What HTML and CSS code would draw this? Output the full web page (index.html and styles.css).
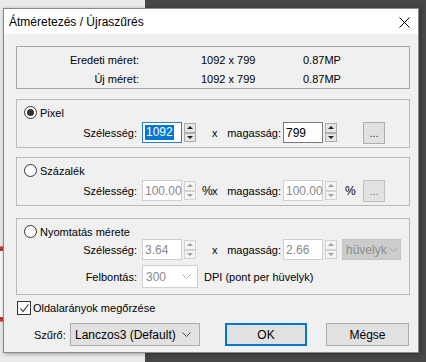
FILE: index.html
```html
<!DOCTYPE html>
<html>
<head>
<meta charset="utf-8">
<link rel="stylesheet" href="styles.css">
</head>
<body>
<div class="desk">
  <div class="bg-strip"></div>
  <div class="dialog">
    <div class="titlebar">
      <span class="title">Átméretezés / Újraszűrés</span>
      <svg class="close" width="11" height="11" viewBox="0 0 11 11"><path d="M0.5 0.5 L10.5 10.5 M10.5 0.5 L0.5 10.5" stroke="#000" stroke-width="1" fill="none"/></svg>
    </div>
    <div class="content">
      <div class="info">
        <div class="info-row"><span class="info-label">Eredeti méret:</span><span class="info-val">1092 x 799</span><span class="info-mp">0.87MP</span></div>
        <div class="info-row"><span class="info-label">Új méret:</span><span class="info-val">1092 x 799</span><span class="info-mp">0.87MP</span></div>
      </div>

      <div class="group g-pixel">
        <div class="ghead"><span class="radio on"></span><span>Pixel</span></div>
        <div class="row">
          <span class="lbl">Szélesség:</span>
          <span class="inp focus"><span class="sel">1092</span></span>
          <span class="spin"><span class="sb"><span class="tri up"></span></span><span class="sb"><span class="tri down"></span></span></span>
          <span class="xch">x</span>
          <span class="lbl2">magasság:</span>
          <span class="inp">799</span>
          <span class="spin"><span class="sb"><span class="tri up"></span></span><span class="sb"><span class="tri down"></span></span></span>
          <span class="dots">...</span>
        </div>
      </div>

      <div class="group g-pct">
        <div class="ghead"><span class="radio"></span><span>Százalék</span></div>
        <div class="row">
          <span class="lbl">Szélesség:</span>
          <span class="inp dis">100.00</span>
          <span class="spin dis"><span class="sb"><span class="tri up"></span></span><span class="sb"><span class="tri down"></span></span></span>
          <span class="pct1">%</span>
          <span class="xch xch2">x</span>
          <span class="lbl2">magasság:</span>
          <span class="inp dis">100.00</span>
          <span class="spin dis"><span class="sb"><span class="tri up"></span></span><span class="sb"><span class="tri down"></span></span></span>
          <span class="pct">%</span>
          <span class="dots dots2">...</span>
        </div>
      </div>

      <div class="group g-print">
        <div class="ghead"><span class="radio"></span><span>Nyomtatás mérete</span></div>
        <div class="row row-p1">
          <span class="lbl">Szélesség:</span>
          <span class="inp dis">3.64</span>
          <span class="spin dis"><span class="sb"><span class="tri up"></span></span><span class="sb"><span class="tri down"></span></span></span>
          <span class="xch">x</span>
          <span class="lbl2">magasság:</span>
          <span class="inp dis">2.66</span>
          <span class="spin dis"><span class="sb"><span class="tri up"></span></span><span class="sb"><span class="tri down"></span></span></span>
          <span class="unit"><span class="unit-text">hüvelyk</span><svg class="chev" width="9" height="5" viewBox="0 0 9 5"><path d="M0.5 0.5 L4.5 4.5 L8.5 0.5" stroke="#a8a8a8" fill="none"/></svg></span>
        </div>
        <div class="row row-p2">
          <span class="lbl">Felbontás:</span>
          <span class="dpi"><span>300</span><svg class="chev" width="9" height="5" viewBox="0 0 9 5"><path d="M0.5 0.5 L4.5 4.5 L8.5 0.5" stroke="#b0b0b0" fill="none"/></svg></span>
          <span class="dpi-text">DPI (pont per hüvelyk)</span>
        </div>
      </div>

      <div class="check-row">
        <span class="checkbox"><svg width="11" height="11" viewBox="0 0 11 11"><path d="M1.5 5.5 L4 8.5 L9.5 1.5" stroke="#222" stroke-width="1.1" fill="none"/></svg></span>
        <span>Oldalarányok megőrzése</span>
      </div>

      <div class="bottom-row">
        <span class="flbl">Szűrő:</span>
        <span class="filter"><span>Lanczos3 (Default)</span><svg class="chev" width="9" height="5" viewBox="0 0 9 5"><path d="M0.5 0.5 L4.5 4.5 L8.5 0.5" stroke="#444" fill="none"/></svg></span>
        <span class="btn ok">OK</span>
        <span class="btn cancel">Mégse</span>
      </div>
    </div>
  </div>
</div>
</body>
</html>
```

FILE: styles.css
```css
html, body {
  margin: 0;
  padding: 0;
}
body {
  width: 426px;
  height: 362px;
  overflow: hidden;
  background: linear-gradient(to right, #ebebeb 0, #ebebeb 145px, #464646 145px, #464646 100%);
  font-family: "Liberation Sans", Arial, sans-serif;
  font-size: 11px;
  color: #000;
}
.desk {
  padding: 8px 0 0 3px;
  position: relative;
}
.bg-strip {
  position: absolute;
  left: 0;
  top: 246px;
  width: 3px;
  height: 74px;
  background: #fafafa;
  border-top: 1px solid #d88;
  border-bottom: 1px solid #d88;
  box-shadow: inset 0 18px 0 -14px #c0392b, inset 0 -34px 0 -30px #c0392b;
}
.dialog {
  position: relative;
  width: 414px;
  height: 343px;
  border: 1px solid #8a8a8a;
  background: #f0f0f0;
  box-shadow: 1px 1px 4px rgba(0,0,0,0.35);
}
.titlebar {
  height: 25px;
  background: #fff;
  display: flex;
  align-items: center;
  padding-left: 5px;
}
.title {
  font-size: 12px;
  flex: 1;
  padding-top: 1px;
}
.close {
  margin-right: 8px;
  margin-top: 2px;
}
.content {
  padding: 12px 8px 0 12px;
  display: flex;
  flex-direction: column;
}
.info {
  border: 1px solid #a8a8a8;
  padding-top: 3px;
  height: 38px;
}
.info-row {
  height: 19px;
  display: flex;
  align-items: center;
}
.info-label {
  width: 122px;
  text-align: right;
}
.info-val {
  margin-left: 62px;
  width: 102px;
}
.group {
  border: 1px solid #bababa;
  box-sizing: border-box;
  padding: 6px 0 0 0;
}
.g-pixel { margin-top: 10px; height: 49px; }
.g-pct { margin-top: 9px; height: 49px; }
.g-print { margin-top: 12px; height: 77px; }
.ghead {
  height: 13px;
  display: flex;
  align-items: center;
  padding-left: 7px;
}
.radio {
  width: 11px;
  height: 11px;
  border: 1px solid #333;
  border-radius: 50%;
  background: #fff;
  margin-right: 3px;
  position: relative;
  flex: none;
}
.radio.on::after {
  content: "";
  position: absolute;
  left: 2px;
  top: 2px;
  width: 7px;
  height: 7px;
  border-radius: 50%;
  background: #333;
}
.row {
  display: flex;
  align-items: center;
  height: 21px;
  margin-top: 3px;
}
.row-p1 { margin-top: 1px; }
.row-p2 { margin-top: 5px; height: 23px; }
.lbl {
  width: 120px;
  text-align: right;
  margin-right: 5px;
  flex: none;
}
.inp {
  box-sizing: border-box;
  width: 40px;
  height: 21px;
  border: 1px solid #7a7a7a;
  background: #fff;
  display: flex;
  align-items: center;
  padding-left: 2px;
  flex: none;
  white-space: nowrap;
  font-size: 12px;
}
.inp.dis {
  border-color: #cfcfcf;
  color: #8a8a8a;
}
.inp.focus {
  border-color: #2b7bd0;
}
.sel {
  background: #0078d7;
  color: #fff;
  line-height: 15px;
  padding: 0 1px;
}
.spin {
  margin-left: 2px;
  width: 12px;
  height: 19px;
  display: flex;
  flex-direction: column;
  justify-content: space-between;
  flex: none;
}
.sb {
  height: 8px;
  border: 1px solid #adadad;
  background: #e5e5e5;
  display: flex;
  align-items: center;
  justify-content: center;
}
.spin.dis .sb {
  border-color: #d3d3d3;
  background: #f4f4f4;
}
.tri {
  width: 0;
  height: 0;
  border-left: 3px solid transparent;
  border-right: 3px solid transparent;
}
.tri.up { border-bottom: 3px solid #222; }
.tri.down { border-top: 3px solid #222; }
.spin.dis .tri.up { border-bottom-color: #a0a0a0; }
.spin.dis .tri.down { border-top-color: #a0a0a0; }
.xch {
  margin-left: 16px;
  width: 7px;
  flex: none;
}
.pct1 {
  width: 0;
  margin-left: 6px;
  font-size: 12px;
  white-space: nowrap;
}
.xch2 { margin-left: 10px; }
.lbl2 {
  width: 54px;
  margin-left: 8px;
  margin-right: 2px;
  text-align: right;
  flex: none;
  white-space: nowrap;
}
.dots {
  box-sizing: border-box;
  margin-left: 26px;
  width: 22px;
  height: 22px;
  border: 1px solid #adadad;
  background: #e1e1e1;
  display: flex;
  align-items: center;
  justify-content: center;
  color: #333;
  flex: none;
}
.dots2 { margin-left: 6px; border-color: #bfbfbf; color: #777; }
.pct {
  margin-left: 8px;
  width: 12px;
  font-size: 12px;
  flex: none;
}
.unit {
  box-sizing: border-box;
  margin-left: 5px;
  width: 59px;
  height: 21px;
  border: 1px solid #c4c4c4;
  background: #cccccc;
  color: #8c8c8c;
  display: flex;
  align-items: center;
  font-size: 12px;
  overflow: hidden;
  flex: none;
}
.unit-text {
  padding-left: 3px;
  white-space: nowrap;
}
.unit .chev { margin-left: 2px; flex: none; }
.dpi {
  box-sizing: border-box;
  width: 56px;
  height: 23px;
  border: 1px solid #d0d0d0;
  background: #fff;
  color: #8a8a8a;
  display: flex;
  align-items: center;
  justify-content: space-between;
  padding: 0 6px 0 3px;
  font-size: 12px;
}
.dpi-text {
  margin-left: 6px;
}
.check-row {
  margin-top: 6px;
  display: flex;
  align-items: center;
  height: 14px;
  padding-left: 1px;
}
.checkbox {
  width: 12px;
  height: 12px;
  border: 1px solid #333;
  background: #fff;
  display: flex;
  align-items: center;
  justify-content: center;
  margin-right: 2px;
}
.bottom-row {
  margin-top: 8px;
  display: flex;
  align-items: center;
  height: 23px;
  padding-left: 18px;
}
.flbl {
  width: 36px;
}
.filter {
  width: 130px;
  height: 23px;
  box-sizing: border-box;
  border: 1px solid #adadad;
  background: #e1e1e1;
  display: flex;
  align-items: center;
  justify-content: space-between;
  padding: 0 8px 0 4px;
  font-size: 12px;
}
.btn {
  height: 23px;
  box-sizing: border-box;
  border: 1px solid #adadad;
  background: #e1e1e1;
  display: flex;
  align-items: center;
  justify-content: center;
  font-size: 12px;
}
.ok {
  margin-left: 25px;
  width: 82px;
  border: 2px solid #0078d7;
}
.cancel {
  margin-left: 19px;
  width: 83px;
}
```
